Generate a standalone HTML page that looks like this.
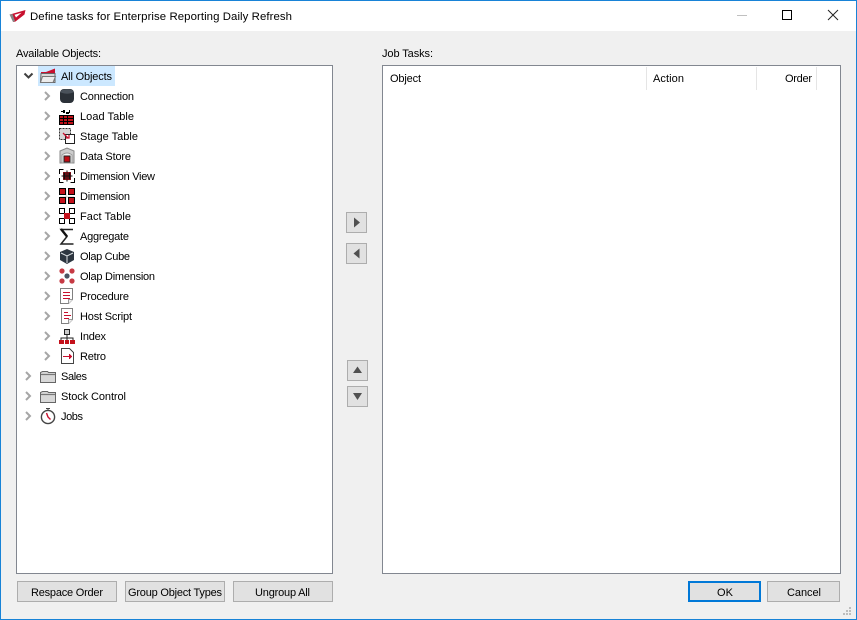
<!DOCTYPE html>
<html><head><meta charset="utf-8"><style>
html,body{margin:0;padding:0;width:857px;height:620px;overflow:hidden;background:#f0f0f0}
svg{display:block}
text{font-family:"Liberation Sans",sans-serif;font-size:11px;fill:#000}
</style></head><body>
<svg width="857" height="620" viewBox="0 0 857 620" xmlns="http://www.w3.org/2000/svg" shape-rendering="crispEdges">
<rect width="857" height="620" fill="#f0f0f0"/>
<rect x="1" y="1" width="855" height="30" fill="#fff"/>
<rect x=".5" y=".5" width="856" height="619" fill="none" stroke="#1883d7"/>
<!-- app icon -->
<g shape-rendering="auto"><path d="M10 14.500L25.500 10l-1 4.500L15.500 21.500l-2 .5z" fill="#c8102e"/><path d="M14.500 14.800l7-2-5.500 4.700z" fill="#fff"/><path d="M9.500 14.500l3.500 7.500 2-1-2.500-7z" fill="#858585"/></g>
<text x="30" y="20" textLength="262" style="font-size:11.4px">Define tasks for Enterprise Reporting Daily Refresh</text>
<!-- window controls -->
<rect x="737" y="15" width="10" height="1" fill="#c0c0c0"/>
<rect x="782.500" y="10.500" width="9" height="9" fill="none" stroke="#000"/>
<path d="M828 10L838 20M838 10L828 20" stroke="#222" fill="none" shape-rendering="auto"/>

<text x="16" y="57" textLength="85">Available Objects:</text>
<text x="382" y="57" textLength="51">Job Tasks:</text>

<!-- panels -->
<rect x="16.500" y="65.500" width="316" height="508" fill="#fff" stroke="#828790"/>
<rect x="382.500" y="65.500" width="458" height="508" fill="#fff" stroke="#828790"/>
<rect x="646" y="67" width="1" height="23" fill="#e5e5e5"/>
<rect x="756" y="67" width="1" height="23" fill="#e5e5e5"/>
<rect x="816" y="67" width="1" height="23" fill="#e5e5e5"/>
<text x="390" y="82" textLength="31">Object</text>
<text x="653" y="82" textLength="31">Action</text>
<text x="785" y="82" textLength="27">Order</text>

<!-- tree selection -->
<rect x="38" y="66" width="77" height="20" fill="#cce8ff"/>
<!-- chevrons -->
<g fill="none" shape-rendering="auto" stroke-width="2">
<path d="M24.500 73.500l4 4 4-4" stroke="#404040"/>
<g stroke="#a6a6a6">
<path d="M45 92l4 4-4 4M45 112l4 4-4 4M45 132l4 4-4 4M45 152l4 4-4 4M45 172l4 4-4 4M45 192l4 4-4 4M45 212l4 4-4 4M45 232l4 4-4 4M45 252l4 4-4 4M45 272l4 4-4 4M45 292l4 4-4 4M45 312l4 4-4 4M45 332l4 4-4 4M45 352l4 4-4 4"/>
<path d="M26 372l4 4-4 4M26 392l4 4-4 4M26 412l4 4-4 4"/>
</g></g>

<!-- All Objects icon -->
<g shape-rendering="auto">
<path d="M41 72h5l9-3.500v5H41z" fill="#c8102e"/>
<path d="M41 73.500h14v9H40.500z" fill="#d8d8d8" stroke="#666"/>
<path d="M40.500 82.500l2-6h13l-2.500 6z" fill="#ececec" stroke="#777"/>
</g>
<!-- Connection -->
<g shape-rendering="auto"><rect x="60" y="89" width="14" height="14" rx="4" fill="#2b3138"/><ellipse cx="67" cy="91.500" rx="6.500" ry="2.200" fill="#4a525b"/></g>
<!-- Load table -->
<g><rect x="59" y="115" width="15" height="10" fill="#000"/>
<path d="M60 116h3v2h-3zM64 116h3v2h-3zM68 116h5v2h-5zM60 119h3v2h-3zM64 119h3v2h-3zM68 119h5v2h-5zM60 122h3v2h-3zM64 122h3v2h-3zM68 122h5v2h-5z" fill="#c01018"/>
<path d="M66 112h3v-2h1v3h-1v1h-3zM65 110h-2v1h-2v1h2v1h2z" fill="#000"/></g>
<!-- Stage table -->
<g><rect x="59.500" y="128.500" width="11" height="11" fill="#d6d6d6" stroke="#333" stroke-dasharray="2 1"/>
<rect x="65.500" y="134.500" width="9" height="9" fill="#fff" stroke="#222"/>
<path d="M63 133l5 5M69 135v3h-3" stroke="#c8102e" fill="none" stroke-width="1.300" shape-rendering="auto"/></g>
<!-- Data store -->
<g><path d="M60 151l7-3 7 3v12H60z" fill="#ccc" stroke="#8a8a8a" shape-rendering="auto"/>
<path d="M62 163v-8q5-4 10 0v8z" fill="#f5f5f5" stroke="#999" shape-rendering="auto"/>
<rect x="64" y="156" width="6" height="6" fill="#c00d15" stroke="#222" stroke-width=".6"/></g>
<!-- Dimension View -->
<g><path d="M59.500 174v-4.500h4M70.500 169.500h4v4.500M74.500 178v4.500h-4M63.500 182.500h-4V178" fill="none" stroke="#000"/>
<rect x="63" y="172" width="8" height="8" fill="#b3101a"/>
<path d="M67 170.500v11M61.500 176h11M64 173h1v6h-1zM69 173h1v6h-1z" stroke="#111" fill="none"/>
</g>
<!-- Dimension -->
<g><path d="M66 190v14M60 197h14" stroke="#ccc"/>
<rect x="59.500" y="188.500" width="6" height="6" fill="#c4111b" stroke="#000"/>
<rect x="68.500" y="188.500" width="6" height="6" fill="#c4111b" stroke="#000"/>
<rect x="59.500" y="197.500" width="6" height="6" fill="#c4111b" stroke="#000"/>
<rect x="68.500" y="197.500" width="6" height="6" fill="#c4111b" stroke="#000"/></g>
<!-- Fact -->
<g><rect x="59.500" y="208.500" width="5" height="5" fill="#fff" stroke="#000"/>
<rect x="69.500" y="208.500" width="5" height="5" fill="#fff" stroke="#000"/>
<rect x="59.500" y="218.500" width="5" height="5" fill="#fff" stroke="#000"/>
<rect x="69.500" y="218.500" width="5" height="5" fill="#fff" stroke="#000"/>
<rect x="64" y="213" width="6" height="6" fill="#c4111b"/></g>
<!-- Aggregate -->
<path d="M73 229.500h-12l6 7-6 7.500h12.500" fill="none" stroke="#222" stroke-width="1.500" shape-rendering="auto"/>
<path d="M61 229l6 7.500" stroke="#111" stroke-width="2.400" fill="none" shape-rendering="auto"/>
<!-- Olap cube -->
<g shape-rendering="auto"><path d="M67 249l7 3v8l-7 4-7-4v-8z" fill="#2d3640"/><path d="M61 253l6 3 6-3M67 256v7" stroke="#dfe3e6" fill="none"/></g>
<!-- Olap dimension -->
<g shape-rendering="auto"><circle cx="62" cy="271" r="2.600" fill="#c63a44"/><circle cx="72" cy="271" r="2.600" fill="#c63a44"/><circle cx="62" cy="281" r="2.600" fill="#c63a44"/><circle cx="72" cy="281" r="2.600" fill="#c63a44"/><circle cx="67" cy="276" r="2.600" fill="#4a5563"/></g>
<!-- Procedure -->
<g><path d="M60.500 288.500h12v11l-4 4h-8z" fill="#fff" stroke="#808080"/>
<path d="M68.500 303.500v-4h4" fill="#eee" stroke="#999"/>
<path d="M63 292h7v1h-7zM63 295h7v1h-7zM63 298h7v1h-7z" fill="#c8102e"/></g>
<!-- Host script -->
<g><path d="M61.500 308.500h11v11l-4 4h-7z" fill="#fff" stroke="#808080"/>
<path d="M68.500 323.500v-4h4" fill="#eee" stroke="#999"/>
<path d="M64 312h4v1h-4zM64 315h7v1h-7zM64 318h5v1h-5z" fill="#c8102e"/></g>
<!-- Index -->
<g><rect x="64.500" y="329.500" width="5" height="5" fill="#ccc" stroke="#222"/>
<path d="M67 335v3M61 341v-3h12v3M67 338v3" stroke="#222" fill="none"/>
<rect x="59" y="340" width="5" height="4" fill="#c4111b"/>
<rect x="65" y="340" width="4" height="4" fill="#c4111b"/>
<rect x="70" y="340" width="5" height="4" fill="#c4111b"/></g>
<!-- Retro -->
<g><path d="M61.500 348.500h8l4 4v11h-12z" fill="#fff" stroke="#444"/>
<path d="M63 356h6v-2l1 0 2 2.500-2 2.500h-1v-2h-6z" fill="#c8102e"/></g>
<!-- Folders -->
<g shape-rendering="auto">
<path d="M40.500 382.500v-10l2-1h5l1 1h7v10z" fill="#d8d8d8" stroke="#666"/>
<path d="M41 374.500h14" stroke="#777" stroke-width="1.200"/>
<path d="M40.500 402.500v-10l2-1h5l1 1h7v10z" fill="#d8d8d8" stroke="#666"/>
<path d="M41 394.500h14" stroke="#777" stroke-width="1.200"/>
<!-- Jobs -->
<circle cx="48" cy="417" r="6.600" fill="#fff" stroke="#444" stroke-width="1.400"/>
<path d="M46 408.500h4M48 408.500v2" stroke="#444" fill="none"/>
<path d="M46.500 413l1.500 4 2.500 2.500" stroke="#c8102e" fill="none" stroke-width="1.400"/>
</g>

<!-- Tree labels -->
<text x="61" y="80" textLength="51">All Objects</text>
<text x="80" y="100" textLength="54">Connection</text>
<text x="80" y="120" textLength="54">Load Table</text>
<text x="80" y="140" textLength="58">Stage Table</text>
<text x="80" y="160" textLength="51">Data Store</text>
<text x="80" y="180" textLength="75">Dimension View</text>
<text x="80" y="200" textLength="50">Dimension</text>
<text x="80" y="220" textLength="51">Fact Table</text>
<text x="80" y="240" textLength="49">Aggregate</text>
<text x="80" y="260" textLength="50">Olap Cube</text>
<text x="80" y="280" textLength="75">Olap Dimension</text>
<text x="80" y="300" textLength="49">Procedure</text>
<text x="80" y="320" textLength="52">Host Script</text>
<text x="80" y="340" textLength="26">Index</text>
<text x="80" y="360" textLength="26">Retro</text>
<text x="61" y="380" textLength="26">Sales</text>
<text x="61" y="400" textLength="65">Stock Control</text>
<text x="61" y="420" textLength="22">Jobs</text>

<!-- arrow buttons -->
<g fill="#e1e1e1" stroke="#adadad">
<rect x="346.500" y="212.500" width="20" height="20"/>
<rect x="346.500" y="243.500" width="20" height="20"/>
<rect x="347.500" y="360.500" width="20" height="20"/>
<rect x="347.500" y="386.500" width="20" height="20"/>
<rect x="17.500" y="581.500" width="99" height="20"/>
<rect x="125.500" y="581.500" width="99" height="20"/>
<rect x="233.500" y="581.500" width="99" height="20"/>
<rect x="767.500" y="581.500" width="72" height="20"/>
</g>
<rect x="689" y="582" width="71" height="19" fill="#e1e1e1" stroke="#0078d7" stroke-width="2"/>
<g fill="#505050" shape-rendering="auto">
<path d="M354 217.500l6 5-6 5z"/>
<path d="M359.500 248.500v10l-6-5z"/>
<path d="M357.500 366.500l4.500 6.500h-9z"/>
<path d="M353 393h9l-4.500 7z"/>
</g>
<text x="31" y="596" textLength="72">Respace Order</text>
<text x="128" y="596" textLength="94">Group Object Types</text>
<text x="255" y="596" textLength="55">Ungroup All</text>
<text x="717" y="596" textLength="16">OK</text>
<text x="787" y="596" textLength="34">Cancel</text>

<!-- resize grip -->
<path d="M849 607h2v2h-2zM846 610h2v2h-2zM849 610h2v2h-2zM843 613h2v2h-2zM846 613h2v2h-2zM849 613h2v2h-2z" fill="#bdbdbd"/>
</svg>
</body></html>
